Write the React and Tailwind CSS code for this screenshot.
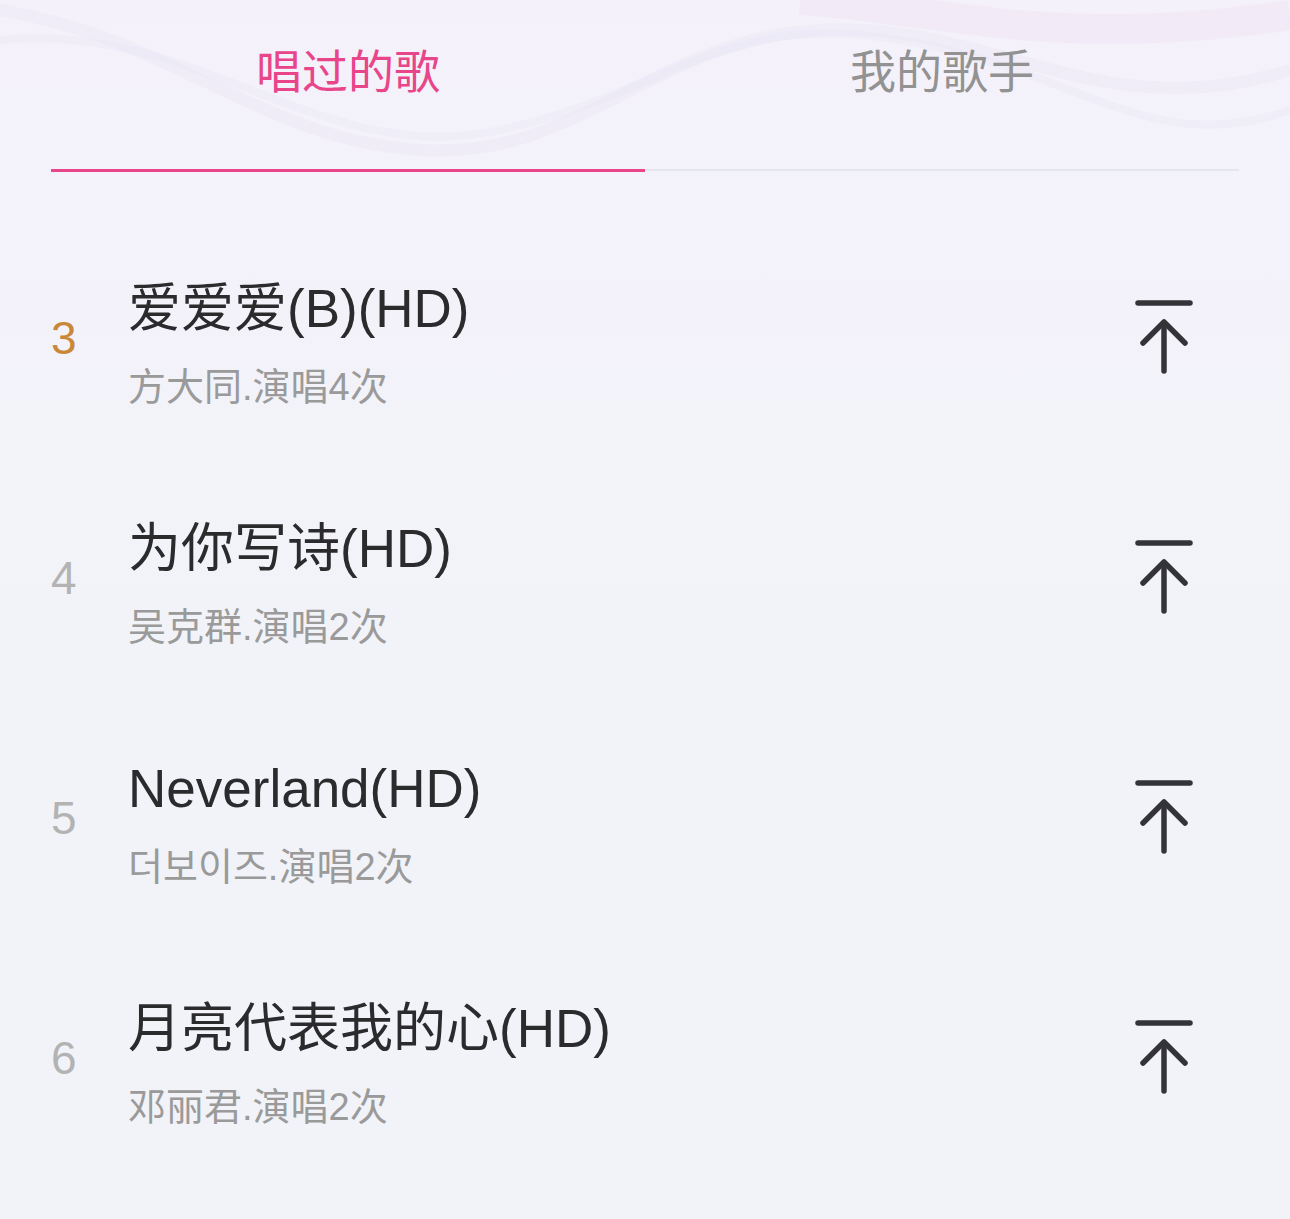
import React from "react";

const songs = [
  { n: 3, title: "爱爱爱(B)(HD)", sub: "方大同.演唱4次", hot: true },
  { n: 4, title: "为你写诗(HD)", sub: "吴克群.演唱2次" },
  { n: 5, title: "Neverland(HD)", sub: "더보이즈.演唱2次" },
  { n: 6, title: "月亮代表我的心(HD)", sub: "邓丽君.演唱2次" },
];

const font = { fontFamily: '"Liberation Sans", "Noto Sans CJK SC", "Noto Sans CJK KR", sans-serif' };

function TopIcon() {
  return (
    <svg width="60" height="76" viewBox="0 0 60 76" fill="none" stroke="#333338" strokeWidth="5.5" strokeLinecap="round" strokeLinejoin="round">
      <line x1="4" y1="3" x2="56" y2="3" />
      <line x1="30" y1="23" x2="30" y2="71" />
      <polyline points="9,43 30,22 51,43" />
    </svg>
  );
}

export default function App() {
  return (
    <div className="relative w-[1290px] min-h-[1219px] overflow-hidden bg-gradient-to-b from-[#f4f1fa] via-[#f2f3f9] to-[#f1f3f8]" style={font}>
      <svg className="absolute left-0 top-0 pointer-events-none" width="1290" height="260" viewBox="0 0 1290 260" fill="none">
        <path d="M0 10 C 180 40, 260 140, 420 150 S 650 40, 820 30 S 1100 130, 1290 70" stroke="#e8e2f3" strokeWidth="12" opacity="0.35" />
        <path d="M0 40 C 200 20, 320 170, 500 130 S 720 10, 900 40 S 1150 160, 1290 110" stroke="#e9e3f5" strokeWidth="8" opacity="0.3" />
        <path d="M800 0 C 950 10, 1050 50, 1290 15" stroke="#f0dcf4" strokeWidth="30" opacity="0.35" />
      </svg>
      <div className="relative">
        <div className="grid grid-cols-2 px-[51px]">
          <div className="h-[172px] pt-[40px] flex justify-center border-b-[3px] border-[#e8458b]">
            <span className="text-[46px] leading-[64px] text-[#e8458b]">唱过的歌</span>
          </div>
          <div className="h-[172px] pt-[40px] flex justify-center">
            <div className="flex flex-col items-center w-full">
              <span className="text-[46px] leading-[64px] text-[#929292]">我的歌手</span>
              <div className="mt-auto mb-[1px] h-[2px] w-full bg-[#e4e6ee]" />
            </div>
          </div>
        </div>
        <div className="mt-[46px]">
          {songs.map((s) => (
            <div key={s.n} className="h-[240px] flex items-center pl-[51px] pr-[96px]">
              <div className={`w-[77px] text-[46px] leading-none ${s.hot ? "text-[#c98838]" : "text-[#b3b3b3]"}`}>{s.n}</div>
              <div className="flex-1 flex flex-col pt-[12px]">
                <div className="text-[53px] leading-[62px] text-[#2b2b2e]">{s.title}</div>
                <div className="mt-[24px] text-[38px] leading-[46px] text-[#9a9a9a]">{s.sub}</div>
              </div>
              <TopIcon />
            </div>
          ))}
        </div>
      </div>
    </div>
  );
}
